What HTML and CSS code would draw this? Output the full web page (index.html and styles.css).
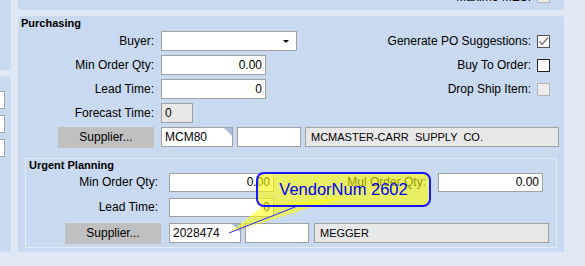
FILE: index.html
```html
<!DOCTYPE html>
<html lang="en">
<head>
  <meta charset="UTF-8">
  <title>Purchasing</title>
  <link rel="stylesheet" href="styles.css">
</head>
<body>
  <div class="screen">
    <div class="side">
      <div class="side-top"></div>
      <div class="side-main">
        <div class="stub"></div>
        <div class="stub"></div>
        <div class="stub"></div>
      </div>
    </div>

    <div class="main">
      <div class="main-top">
        <div class="check-item peek">
          <span>Maximo MES:</span>
          <span class="check disabled"></span>
        </div>
      </div>

      <div class="panel">
        <div class="panel-title">Purchasing</div>

        <div class="row">
          <div class="lbl">Buyer:</div>
          <div class="field combo"><span class="arrow"></span></div>
          <div class="check-item">
            <span>Generate PO Suggestions:</span>
            <span class="check checked">
              <svg width="11" height="11" viewBox="0 0 11 11"><polyline points="1.5,5.5 4,8.5 10,1.5" fill="none" stroke="#707070" stroke-width="1.2"/></svg>
            </span>
          </div>
        </div>

        <div class="row">
          <div class="lbl">Min Order Qty:</div>
          <div class="field num w105">0.00</div>
          <div class="check-item">
            <span>Buy To Order:</span>
            <span class="check"></span>
          </div>
        </div>

        <div class="row">
          <div class="lbl">Lead Time:</div>
          <div class="field num w105">0</div>
          <div class="check-item">
            <span>Drop Ship Item:</span>
            <span class="check disabled"></span>
          </div>
        </div>

        <div class="row">
          <div class="lbl">Forecast Time:</div>
          <div class="field ro w32">0</div>
        </div>

        <div class="row supplier-row">
          <div class="lbl"><button class="btn">Supplier...</button></div>
          <div class="field code w72">MCM80</div>
          <div class="field w64"></div>
          <div class="field ro name w254">MCMASTER-CARR  SUPPLY  CO.</div>
        </div>

        <div class="urgent">
          <div class="box-title">Urgent Planning</div>

          <div class="urow">
            <div class="ulbl">Min Order Qty:</div>
            <div class="field num w105">0.00</div>
            <div class="ulbl-right">Mul Order Qty:</div>
            <div class="field num w105">0.00</div>
          </div>

          <div class="urow">
            <div class="ulbl">Lead Time:</div>
            <div class="field num w105">0</div>
          </div>

          <div class="urow supplier-row">
            <div class="ulbl"><button class="btn">Supplier...</button></div>
            <div class="field code w72">2028474</div>
            <div class="field w64"></div>
            <div class="field ro name w236">MEGGER</div>
          </div>
        </div>
      </div>
    </div>
  </div>

  <!-- tooltip balloon over the form -->
  <svg class="pointer" width="585" height="266" viewBox="0 0 585 266">
    <polygon points="229,233 263,206 345,197" fill="rgba(255,255,0,0.55)"/>
    <line x1="229" y1="233" x2="300" y2="205" stroke="#2a2aff" stroke-width="1"/>
  </svg>
  <div class="balloon">VendorNum 2602</div>
</body>
</html>
```

FILE: styles.css
```css
body {
  margin: 0;
  width: 585px;
  height: 266px;
  overflow: hidden;
  background-color: #dfe8f4;
  font-family: 'Liberation Sans', Arial, sans-serif;
  font-size: 12px;
  color: #000;
  position: relative;
}
.screen {
  display: flex;
  gap: 7px;
  height: 252px;
}
.side {
  width: 11px;
  display: flex;
  flex-direction: column;
  gap: 6px;
}
.side-top {
  height: 70px;
  flex-shrink: 0;
  background-color: #c9d9ef;
  border-radius: 0 0 4px 0;
}
.side-main {
  flex: 1;
  background-color: #c9d9ef;
  border-radius: 0 4px 0 0;
  overflow: hidden;
  padding-top: 15px;
  display: flex;
  flex-direction: column;
  gap: 6px;
}
.stub {
  width: 40px;
  height: 18px;
  margin-left: -35px;
  background-color: #fff;
  border: 1px solid #a0a0a0;
  box-sizing: border-box;
}
.main {
  width: 546px;
  display: flex;
  flex-direction: column;
  gap: 6px;
}
.main-top {
  height: 10px;
  flex-shrink: 0;
  background-color: #c9d9ef;
  border-radius: 0 0 4px 4px;
  overflow: hidden;
  display: flex;
  justify-content: flex-end;
  padding-right: 14px;
}
.peek {
  margin-top: -10px;
  height: 13px;
}
.panel {
  flex: 1;
  min-height: 0;
  background-color: #c9d9ef;
  border-radius: 4px 4px 0 0;
  padding: 0 14px 4px 0;
  display: flex;
  flex-direction: column;
}
.panel-title, .box-title {
  font-size: 11px;
  font-weight: bold;
  line-height: 13px;
  padding-left: 3px;
}
.panel-title {
  margin-top: 1px;
  margin-bottom: 1px;
}
.row {
  display: flex;
  align-items: center;
  gap: 7px;
  height: 20px;
  margin-bottom: 4px;
}
.lbl {
  width: 136px;
  text-align: right;
  flex-shrink: 0;
}
.field {
  height: 20px;
  box-sizing: border-box;
  border: 1px solid #a0a0a0;
  background-color: #fff;
  padding: 0 3px;
  line-height: 18px;
  font-size: 12px;
  white-space: pre;
  position: relative;
  flex-shrink: 0;
}
.field.num {
  text-align: right;
}
.field.ro {
  background-color: #e8e8e8;
}
.field.name {
  font-size: 11px;
  padding-left: 5px;
}
.field.code::after {
  content: '';
  position: absolute;
  top: 0;
  right: 0;
  border-style: solid;
  border-width: 0 8px 8px 0;
  border-color: transparent #a8bcd8 transparent transparent;
}
.w32 { width: 32px; }
.w64 { width: 64px; }
.w72 { width: 72px; }
.w105 { width: 105px; }
.w236 { width: 236px; }
.w254 { width: 254px; }
.combo {
  width: 136px;
  display: flex;
  justify-content: flex-end;
  align-items: center;
  padding-right: 7px;
}
.arrow {
  width: 0;
  height: 0;
  border-style: solid;
  border-width: 3px 3px 0 3px;
  border-color: #000 transparent transparent transparent;
}
.check-item {
  margin-left: auto;
  display: flex;
  align-items: center;
  gap: 6px;
}
.check {
  width: 13px;
  height: 13px;
  box-sizing: border-box;
  border: 1px solid #222;
  background-color: #fff;
  display: flex;
  align-items: center;
  justify-content: center;
}
.check.checked {
  border-color: #505050;
}
.check.disabled {
  border-color: #b4b4b4;
  background-color: #ececec;
}
.btn {
  width: 96px;
  height: 21px;
  background-color: #c0c0c0;
  border: none;
  padding: 0;
  font-family: 'Liberation Sans', Arial, sans-serif;
  font-size: 12px;
  color: #000;
}
.urgent {
  flex: 1;
  min-height: 0;
  margin: 7px -7px 0 7px;
  border: 1px solid #e3ebf6;
  padding-right: 9px;
  display: flex;
  flex-direction: column;
}
.urow {
  display: flex;
  align-items: center;
  gap: 8px;
  height: 20px;
  margin-bottom: 5px;
}
.urow:last-child {
  margin-bottom: 0;
}
.urow .field {
  height: 19px;
  line-height: 17px;
}
.ulbl {
  width: 135px;
  text-align: right;
  flex-shrink: 0;
  box-sizing: border-box;
  padding-right: 3px;
}
.ulbl-right {
  margin-left: auto;
  margin-right: 4px;
}
.urow > .field:last-child.num {
  margin-right: 4px;
}
/* supplier rows: button sits in the label column */
.row.supplier-row, .urow.supplier-row {
  gap: 4px;
}
.supplier-row .lbl, .supplier-row .ulbl {
  display: flex;
  justify-content: flex-end;
  padding-right: 0;
}
.row.supplier-row .field.code {
  margin-left: 3px;
}
.urow.supplier-row .field.code {
  margin-left: 4px;
}
.urow.supplier-row {
  margin-top: 1px;
}
.urow.supplier-row .field {
  height: 20px;
  line-height: 18px;
}
.urow.supplier-row .field.name {
  margin-left: 1px;
  width: 235px;
}
.pointer {
  position: absolute;
  left: 0;
  top: 0;
  pointer-events: none;
}
.balloon {
  position: absolute;
  left: 256px;
  top: 172px;
  width: 175px;
  height: 35px;
  box-sizing: border-box;
  border: 2px solid #1818ff;
  border-radius: 8px;
  background-color: rgba(255, 255, 0, 0.58);
  color: #0000ee;
  font-size: 16.5px;
  line-height: 31px;
  text-align: center;
}
```
